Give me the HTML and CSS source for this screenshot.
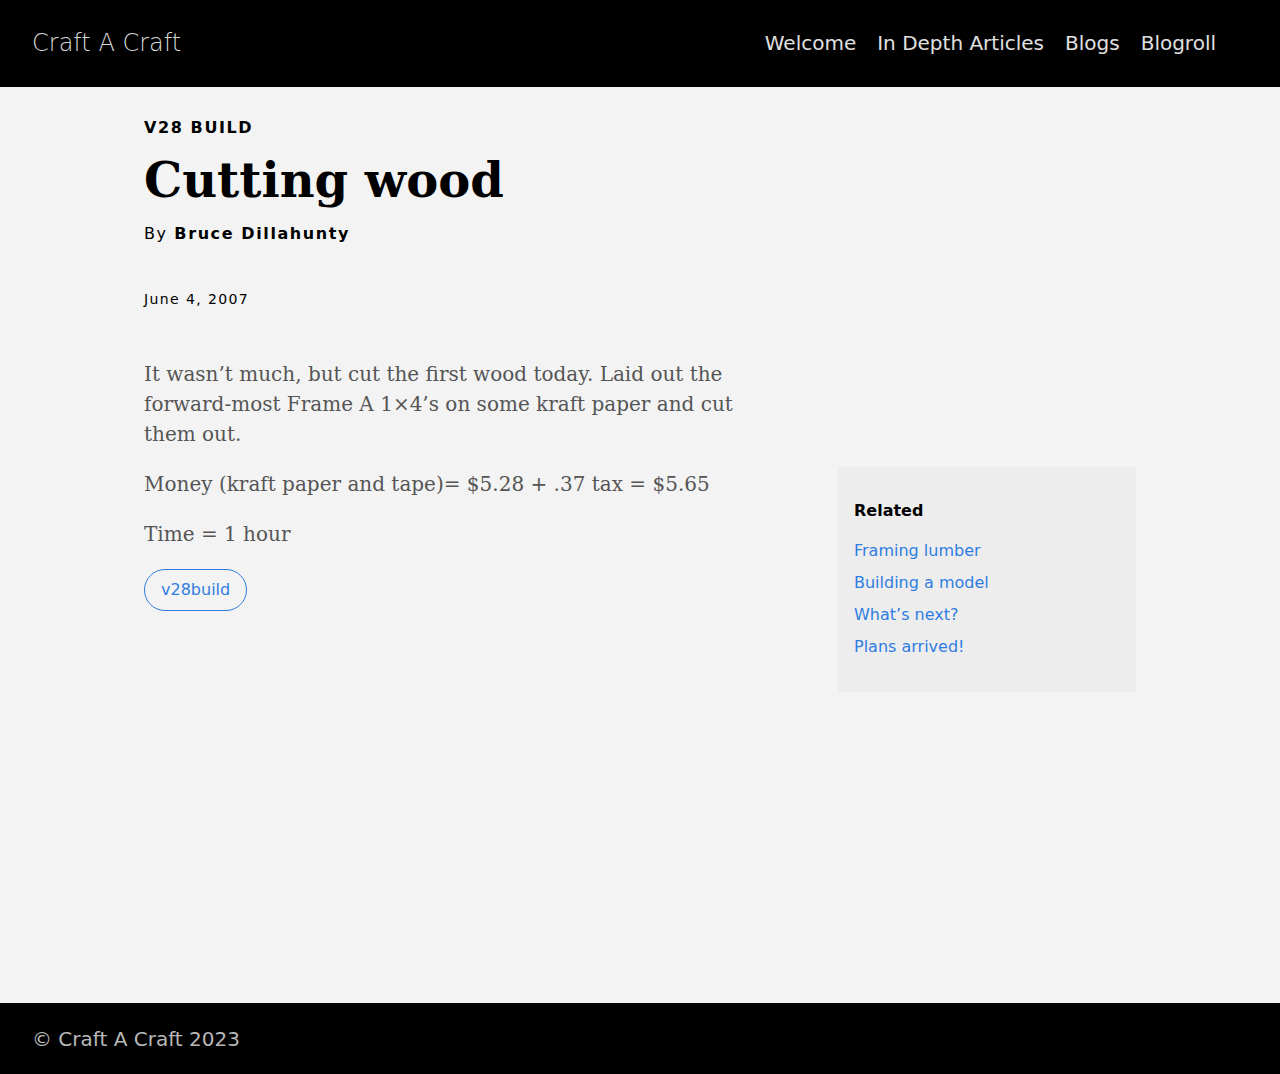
FILE: index.html
```html
<!DOCTYPE html>
<html lang="en">
<head>
<meta charset="utf-8">
<title>Cutting wood - Craft A Craft</title>
<link rel="stylesheet" href="styles.css">
</head>
<body>
<header class="site-header">
  <a class="logo" href="#">Craft A Craft</a>
  <nav class="nav">
    <a href="#">Welcome</a>
    <a href="#">In Depth Articles</a>
    <a href="#">Blogs</a>
    <a href="#">Blogroll</a>
  </nav>
</header>
<main class="page">
  <div class="post-head">
    <div class="category">V28 BUILD</div>
    <h1 class="title">Cutting wood</h1>
    <div class="byline">By <strong>Bruce Dillahunty</strong></div>
    <div class="date">June 4, 2007</div>
  </div>
  <div class="columns">
    <article class="content">
      <p>It wasn’t much, but cut the first wood today. Laid out the forward-most Frame A 1×4’s on some kraft paper and cut them out.</p>
      <p>Money (kraft paper and tape)= $5.28 + .37 tax = $5.65</p>
      <p>Time = 1 hour</p>
      <div class="tags"><a class="tag" href="#">v28build</a></div>
    </article>
    <aside class="sidebar">
      <div class="related">
        <h3>Related</h3>
        <ul>
          <li><a href="#">Framing lumber</a></li>
          <li><a href="#">Building a model</a></li>
          <li><a href="#">What’s next?</a></li>
          <li><a href="#">Plans arrived!</a></li>
        </ul>
      </div>
    </aside>
  </div>
</main>
<footer class="site-footer">© Craft A Craft 2023</footer>
</body>
</html>
```
FILE: styles.css
```css
* { box-sizing: border-box; }
html, body { margin: 0; padding: 0; }
body {
  background: #f3f3f3;
  font-family: "DejaVu Sans", sans-serif;
  color: #000;
  min-height: 1074px;
  display: flex;
  flex-direction: column;
}
a { text-decoration: none; }
.site-header {
  background: #000;
  height: 87px;
  display: flex;
  align-items: center;
  justify-content: space-between;
  padding: 0 64px 0 32px;
}
.logo {
  font-family: "DejaVu Sans", sans-serif;
  font-weight: 200;
  font-size: 24px;
  color: #d8d8d8;
  margin-top: -2px;
}
.nav { display: flex; gap: 21px; }
.nav a { color: #e0e0e0; font-size: 20px; margin-top: -2px; }
.page {
  flex: 1;
  width: 992px;
  margin: 0 auto;
  padding-top: 31px;
}
.category {
  font-weight: bold;
  font-size: 16px;
  letter-spacing: 0.1em;
  line-height: 20px;
}
.title {
  font-family: "DejaVu Serif", serif;
  font-weight: bold;
  font-size: 48px;
  line-height: 60px;
  margin: 12px 0 12px;
}
.byline { font-size: 16px; letter-spacing: 0.1em; line-height: 24px; }
.byline strong { font-weight: bold; }
.date { font-size: 14px; letter-spacing: 0.1em; margin-top: 43px; line-height: 20px; }
.columns {
  display: flex;
  justify-content: space-between;
  margin-top: 50px;
}
.content { width: 600px; }
.content p {
  font-family: "DejaVu Serif", serif;
  font-size: 20px;
  line-height: 30px;
  color: #555;
  margin: 0 0 20px;
}
.tag {
  display: inline-block;
  border: 1px solid #2f7de1;
  color: #2f7de1;
  border-radius: 21px;
  height: 42px;
  line-height: 40px;
  padding: 0 16px;
  font-size: 16px;
}
.sidebar { width: 298px; padding-top: 108px; }
.related {
  background: #ededed;
  padding: 34px 16px 29px;
}
.related h3 { margin: 0 0 14px; font-size: 16px; line-height: 20px; }
.related ul { list-style: none; margin: 0; padding: 0; }
.related li { line-height: 32px; font-size: 16px; }
.related a { color: #2f7de1; }
.site-footer {
  background: #000;
  color: #b8b8b8;
  height: 71px;
  padding: 0 32px;
  display: flex;
  align-items: center;
  font-size: 20px;
}
```
